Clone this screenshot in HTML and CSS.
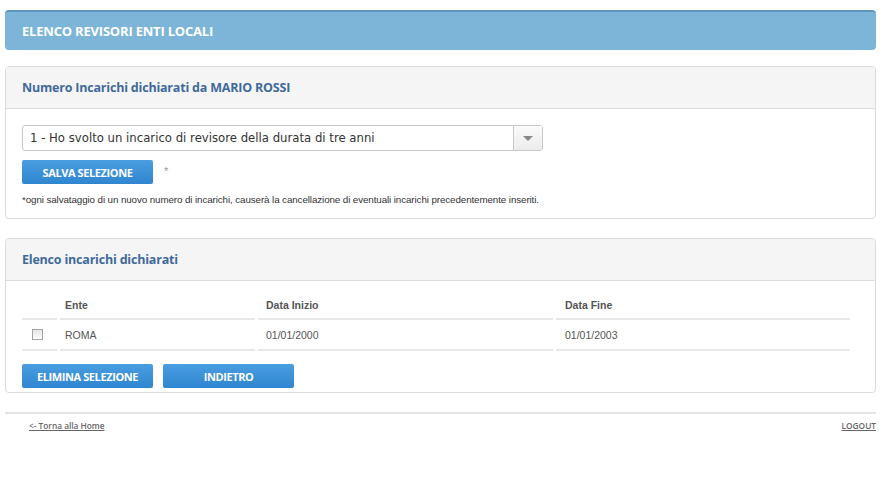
FILE: index.html
```html
<!DOCTYPE html>
<html lang="it">
<head>
<meta charset="utf-8">
<title>Elenco Revisori Enti Locali</title>
<link rel="stylesheet" href="styles.css">
</head>
<body>
<div class="page">
  <div class="topbar">ELENCO REVISORI ENTI LOCALI</div>

  <div class="panel panel-first">
    <div class="panel-head">Numero Incarichi dichiarati da MARIO ROSSI</div>
    <div class="panel-body">
      <div class="select">
        <span class="select-text">1 - Ho svolto un incarico di revisore della durata di tre anni</span>
        <span class="select-arrow"><span class="caret"></span></span>
      </div>
      <div class="btn-row">
        <button class="btn">SALVA SELEZIONE</button>
        <span class="star">*</span>
      </div>
      <p class="note">*ogni salvataggio di un nuovo numero di incarichi, causerà la cancellazione di eventuali incarichi precedentemente inseriti.</p>
    </div>
  </div>

  <div class="panel panel-second">
    <div class="panel-head">Elenco incarichi dichiarati</div>
    <div class="panel-body body-table">
      <table class="grid">
        <thead>
          <tr>
            <th class="c-check"></th>
            <th class="c-ente">Ente</th>
            <th class="c-ini">Data Inizio</th>
            <th class="c-fine">Data Fine</th>
          </tr>
        </thead>
        <tbody>
          <tr>
            <td class="c-check"><span class="checkbox"></span></td>
            <td class="c-ente">ROMA</td>
            <td class="c-ini">01/01/2000</td>
            <td class="c-fine">01/01/2003</td>
          </tr>
        </tbody>
      </table>
      <div class="btn-row btn-row-bottom">
        <button class="btn">ELIMINA SELEZIONE</button>
        <button class="btn">INDIETRO</button>
      </div>
    </div>
  </div>

  <div class="footer">
    <a href="#" class="flink">&lt;- Torna alla Home</a>
    <a href="#" class="flink">LOGOUT</a>
  </div>
</div>
</body>
</html>
```

FILE: styles.css
```css
* { box-sizing: border-box; }
html, body { margin: 0; padding: 0; background: #fff; }
body { font-family: "Liberation Sans", Arial, sans-serif; color: #333; }

.page { padding: 10px 8px 0 5px; }

.topbar {
  height: 40px;
  background: #7cb5d7;
  border-top: 2px solid #5c93bf;
  border-radius: 4px;
  color: #fff;
  font-family: "Open Sans", sans-serif;
  font-weight: 700;
  font-size: 13px;
  letter-spacing: -0.2px;
  padding: 0 17px;
  display: flex;
  align-items: center;
}

.panel {
  border: 1px solid #dcdcdc;
  border-radius: 4px;
  background: #fff;
}
.panel-first { margin-top: 16px; }
.panel-second { margin-top: 19px; }

.panel-head {
  height: 42px;
  background: #f5f5f5;
  border-bottom: 1px solid #dcdcdc;
  border-radius: 4px 4px 0 0;
  color: #3f6a9c;
  font-family: "Open Sans", sans-serif;
  font-weight: 700;
  font-size: 12.5px;
  letter-spacing: -0.2px;
  padding: 0 16px;
  display: flex;
  align-items: center;
}

.panel-body { padding: 16px 16px 13px 16px; }

.select {
  width: 521px;
  height: 26px;
  border: 1px solid #c9c9c9;
  border-radius: 3px;
  display: flex;
  align-items: stretch;
  background: #fff;
}
.select-text {
  flex: 1;
  display: flex;
  align-items: center;
  padding-left: 7px;
  font-family: "DejaVu Sans", Verdana, sans-serif;
  font-size: 11.7px;
  color: #333;
}
.select-arrow {
  width: 29px;
  border-left: 1px solid #c9c9c9;
  background: linear-gradient(#fafafa, #ececec);
  display: flex;
  align-items: center;
  justify-content: center;
}
.caret {
  width: 0; height: 0;
  border-left: 5px solid transparent;
  border-right: 5px solid transparent;
  border-top: 5px solid #888;
}

.btn-row {
  display: flex;
  align-items: center;
  gap: 10px;
  margin-top: 9px;
}
.btn {
  width: 131px;
  height: 24px;
  border: 0;
  border-radius: 2px;
  background: linear-gradient(#4a9de0, #2f86cf);
  color: #fff;
  font-family: "Open Sans", sans-serif;
  font-weight: 700;
  font-size: 11px;
  letter-spacing: -0.4px;
  padding: 0;
  margin: 0;
  cursor: pointer;
}
.star { color: #999; font-size: 11px; margin-top: -2px; margin-left: 1px; }

.note {
  margin: 10px 0 0 0;
  font-size: 9.8px;
  line-height: 11px;
  color: #333;
  letter-spacing: -0.1px;
}

.body-table { padding: 10px 22px 4px 16px; }

.grid {
  width: 834px;
  table-layout: fixed;
  border-collapse: separate;
  border-spacing: 3px 0;
  margin-left: -3px;
  font-size: 10.5px;
  color: #555;
}
.grid th, .grid td {
  text-align: left;
  border-bottom: 2px solid #e8e8e8;
  padding: 0;
}
.grid th { height: 29px; font-weight: 700; color: #555; }
.grid td { height: 31px; }
.grid .c-check { width: 35px; padding-left: 10px; }
.grid .c-ente { width: 195px; padding-left: 5px; }
.grid .c-ini { width: 295px; padding-left: 8px; }
.grid .c-fine { padding-left: 9px; }

.checkbox {
  display: inline-block;
  width: 11px;
  height: 11px;
  border: 1px solid #a5a5a5;
  background: linear-gradient(#e6e6e6, #fdfdfd);
  vertical-align: middle;
  margin-top: -3px;
}

.btn-row-bottom { margin-top: 13px; }

.footer {
  margin-top: 19px;
  border-top: 2px solid #e3e3e3;
  padding: 6px 0 0 24px;
  display: flex;
  justify-content: space-between;
}
.flink {
  font-family: "Open Sans", sans-serif;
  font-size: 8.3px;
  font-weight: 600;
  color: #666;
  text-decoration: underline;
}
```
